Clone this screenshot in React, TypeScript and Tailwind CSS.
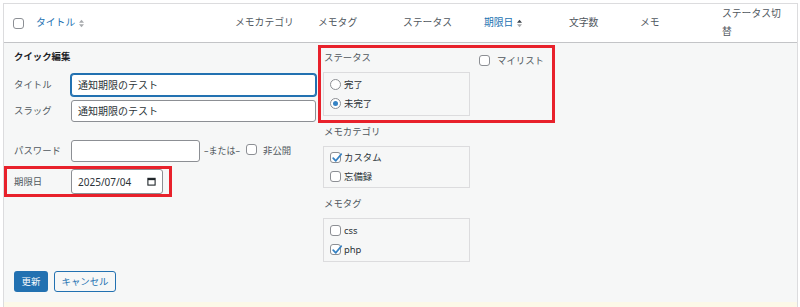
import React from "react";

const font = { fontFamily: '"Noto Sans", "Noto Sans CJK JP", sans-serif' };

function Checkbox({ checked = false }: { checked?: boolean }) {
  return (
    <span className="relative inline-flex h-[11px] w-[11px] shrink-0 rounded-[3px] border border-[#8c8f94] bg-white">
      {checked && (
        <svg viewBox="0 0 12 12" className="absolute left-[0px] top-[-1px] h-[12px] w-[12px]">
          <path d="M2.2 6.2 L4.8 8.8 L10.2 2.2" fill="none" stroke="#3582c4" strokeWidth="1.8" strokeLinecap="round" strokeLinejoin="round" />
        </svg>
      )}
    </span>
  );
}

function Radio({ checked = false }: { checked?: boolean }) {
  return (
    <span className="inline-flex h-[11px] w-[11px] shrink-0 items-center justify-center rounded-full border border-[#8c8f94] bg-white">
      {checked && <span className="h-[5px] w-[5px] rounded-full bg-[#3582c4]" />}
    </span>
  );
}

function SortIcon({ active = false }: { active?: boolean }) {
  return (
    <svg viewBox="0 0 6 10" className="ml-[4px] h-[9px] w-[5px]">
      <path d="M0 4 L3 0.5 L6 4 Z" fill={active ? "#3c434a" : "#a7aaad"} />
      <path d="M0 6 L3 9.5 L6 6 Z" fill="#a7aaad" />
    </svg>
  );
}

export default function App() {
  return (
    <div className="h-[307px] w-[800px] bg-white pl-[3px] pr-[2px] pt-[3px]" style={font}>
      <div className="h-[304px] border-x border-t border-[#dcdcde] text-[#3c434a]">
        {/* Header */}
        <div className="flex h-[39px] border-b border-[#c3c4c7] bg-white text-[9.8px] leading-[18px] text-[#50575e]">
          <div className="flex w-[32px] items-center pl-[9px]">
            <Checkbox />
          </div>
          <div className="flex w-[199px] items-center text-[#2271b1]">
            タイトル
            <SortIcon />
          </div>
          <div className="flex w-[83px] items-center">メモカテゴリ</div>
          <div className="flex w-[85px] items-center">メモタグ</div>
          <div className="flex w-[81px] items-center">ステータス</div>
          <div className="flex w-[85px] items-center text-[#2271b1]">
            期限日
            <SortIcon active />
          </div>
          <div className="flex w-[71px] items-center">文字数</div>
          <div className="flex w-[82px] items-center">メモ</div>
          <div className="flex w-[64px] items-center">ステータス切替</div>
        </div>

        {/* Body */}
        <div className="flex h-[259px] bg-[#f6f7f7]">
          {/* Left column */}
          <div className="flex w-[314px] flex-col text-[9.4px] leading-[14px] text-[#50575e]">
            <div className="ml-[10px] mt-[7px] font-bold text-[#1d2327]">クイック編集</div>
            <div className="ml-[10px] mt-[10px] flex items-center">
              <span className="w-[57px]">タイトル</span>
              <div className="flex h-[22px] w-[245px] items-center rounded-[3px] border border-[#2271b1] bg-white pl-[6px] text-[10px] text-[#2c3338] shadow-[0_0_0_1px_#2271b1]">
                通知期限のテスト
              </div>
            </div>
            <div className="ml-[10px] mt-[4px] flex items-center">
              <span className="w-[57px]">スラッグ</span>
              <div className="flex h-[22px] w-[245px] items-center rounded-[3px] border border-[#8c8f94] bg-white pl-[6px] text-[10px] text-[#2c3338]">
                通知期限のテスト
              </div>
            </div>
            <div className="ml-[10px] mt-[18px] flex items-center">
              <span className="w-[57px]">パスワード</span>
              <div className="h-[22px] w-[129px] rounded-[3px] border border-[#8c8f94] bg-white" />
              <span className="ml-[4px] text-[9px]">–または–</span>
              <span className="ml-[6px]">
                <Checkbox />
              </span>
              <span className="ml-[6px]">非公開</span>
            </div>
            <div className="mt-[4px] flex w-[168px] items-center border-[3px] border-[#e8212b] pl-[7px]">
              <span className="w-[57px]">期限日</span>
              <div className="flex h-[25px] w-[92px] items-center justify-between rounded-[3px] border border-[#8c8f94] bg-white pl-[6px] pr-[6px] text-[10px] text-[#2c3338]">
                <span>2025/07/04</span>
                <svg viewBox="0 0 10 10" className="h-[9px] w-[9px]">
                  <rect x="1" y="1.5" width="8" height="7.5" fill="none" stroke="#1d2327" strokeWidth="1.2" />
                  <rect x="1" y="1.5" width="8" height="2" fill="#1d2327" />
                </svg>
              </div>
            </div>
            <div className="ml-[10px] mt-[74px] flex gap-[6px] text-[9.4px]">
              <div className="flex h-[21px] w-[34px] items-center justify-center rounded-[3px] bg-[#2271b1] text-white">
                更新
              </div>
              <div className="flex h-[21px] w-[62px] items-center justify-center rounded-[3px] border border-[#2271b1] bg-[#f6f7f7] text-[#2271b1]">
                キャンセル
              </div>
            </div>
          </div>

          {/* Right column */}
          <div className="flex flex-col text-[9.4px] leading-[14px] text-[#50575e]">
            <div className="mt-[2px] flex h-[78px] w-[237px] border-[3px] border-[#e8212b]">
              <div className="flex w-[158px] flex-col pl-[2px] pt-[3px]">
                <span className="pl-[1px]">ステータス</span>
                <div className="mt-[7px] flex h-[44px] w-[147px] flex-col border border-[#dcdcde] pl-[6px] pt-[2px] text-[#2c3338]">
                  <div className="flex h-[19px] items-center gap-[3px]">
                    <Radio />
                    <span>完了</span>
                  </div>
                  <div className="flex h-[19px] items-center gap-[3px]">
                    <Radio checked />
                    <span>未完了</span>
                  </div>
                </div>
              </div>
              <div className="flex h-[21px] items-center gap-[7px] pt-[4px]">
                <Checkbox />
                <span>マイリスト</span>
              </div>
            </div>

            <div className="pl-[5px]">
              <div className="mt-[2px] pl-[1px]">メモカテゴリ</div>
              <div className="mt-[7px] flex h-[42px] w-[147px] flex-col border border-[#dcdcde] pl-[6px] pt-[1px] text-[#2c3338]">
                <div className="flex h-[19px] items-center gap-[3px]">
                  <Checkbox checked />
                  <span>カスタム</span>
                </div>
                <div className="flex h-[19px] items-center gap-[3px]">
                  <Checkbox />
                  <span>忘備録</span>
                </div>
              </div>
              <div className="mt-[9px] pl-[1px]">メモタグ</div>
              <div className="mt-[7px] flex h-[44px] w-[147px] flex-col border border-[#dcdcde] pl-[6px] pt-[2px] text-[#2c3338]">
                <div className="flex h-[19px] items-center gap-[3px]">
                  <Checkbox />
                  <span>css</span>
                </div>
                <div className="flex h-[19px] items-center gap-[3px]">
                  <Checkbox checked />
                  <span>php</span>
                </div>
              </div>
            </div>
          </div>
        </div>
        <div className="h-[6px] bg-[#fcf9e8]" />
      </div>
    </div>
  );
}
